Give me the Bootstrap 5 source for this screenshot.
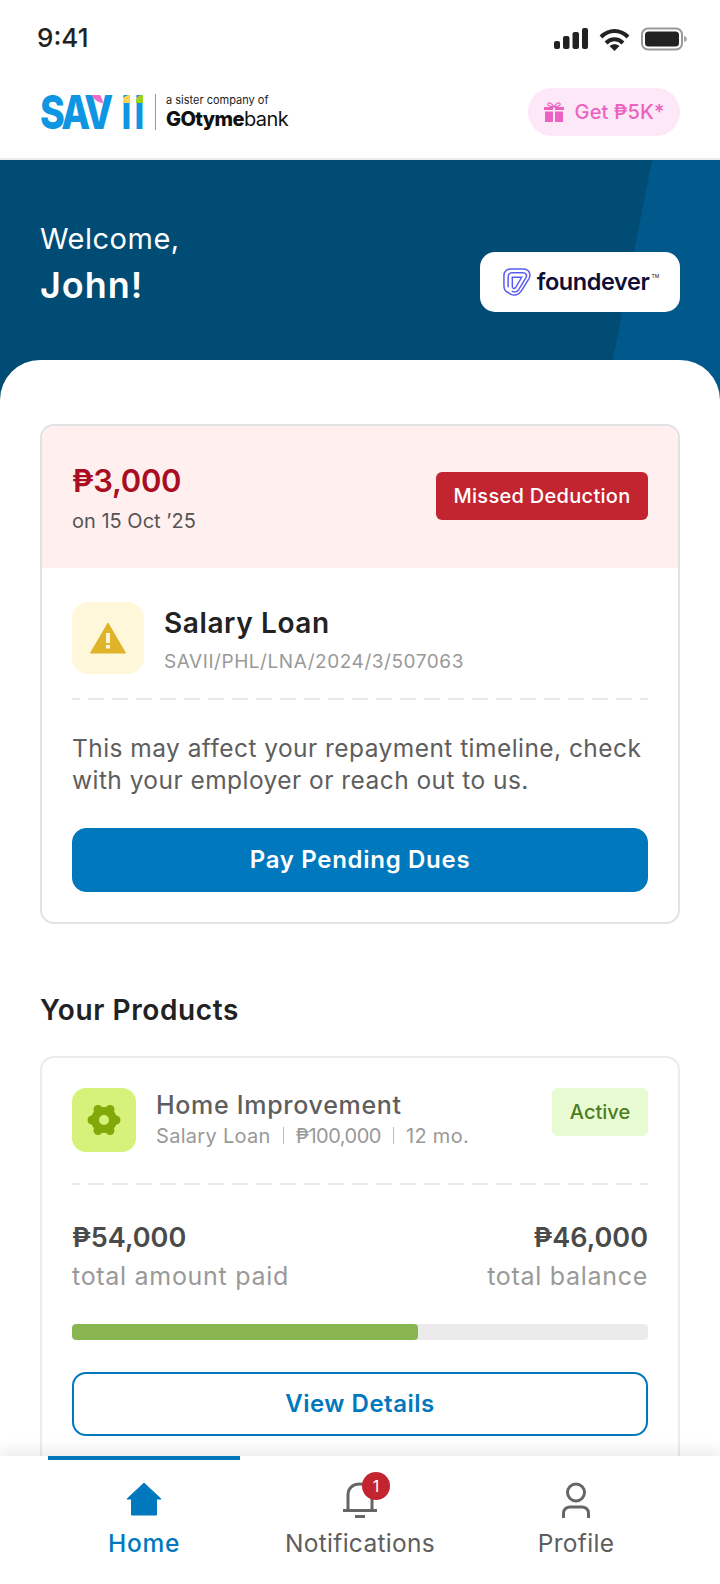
<!DOCTYPE html>
<html lang="en">
<head>
    <meta charset="UTF-8">
    <meta name="viewport" content="width=device-width, initial-scale=1.0">
    <title>SAVii Home</title>
    <link href="https://cdn.jsdelivr.net/npm/bootstrap@5.3.2/dist/css/bootstrap.min.css" rel="stylesheet">
    <style>
        html, body { height: 100%; }
        body {
            font-family: Inter, "Noto Sans", sans-serif;
            color: #222;
            background: #fff;
            overflow: hidden;
        }
        .app-screen { height: 1584px; }
        .status-bar { height: 70px; padding: 22px 33px 0 37px; }
        .status-time { font-size: 26px; font-weight: 500; line-height: 32px; }
        .status-icons { gap: 11px; padding-top: 5px; }
        .top-header { height: 90px; padding: 0 40px 4px; border-bottom: 2px solid #ececec; }
        .brand-savii { position: relative; width: 103px; height: 36px; font-size: 47px; line-height: 36px; font-weight: 800; color: #0f96e2; }
        .brand-sav { width: 80px; white-space: nowrap; }
        .brand-sav span { display: inline-block; transform: scaleX(.8); transform-origin: left center; letter-spacing: -3.5px; }
        .brand-i { width: 13px; font-weight: 700; }
        .brand-i span { transform: scaleX(.85); }
        .brand-petal { position: absolute; left: 0; top: -6px; }
        .brand-sep { width: 1px; height: 36px; background: #999; margin: 0 10px 0 12px; }
        .brand-sister { font-size: 11px; line-height: 13px; color: #222; }
        .brand-gotyme { font-size: 20px; line-height: 22px; color: #111; letter-spacing: -.6px; margin-top: 1px; }
        .brand-gotyme b { font-weight: 800; }
        .gift-pill { height: 48px; width: 152px; background: #fde8f7; color: #ec62c0; border-radius: 24px; font-size: 20px; font-weight: 500; letter-spacing: .1px; gap: 11px; }
        .hero-band { position: relative; height: 240px; background: #004c74; color: #fff; padding: 0 40px 88px; overflow: hidden; }
        .hero-band::before { content: ""; position: absolute; inset: 0; background: #00598a; clip-path: polygon(652px 0, 720px 0, 720px 100%, 605px 100%); }
        .hero-text, .employer-chip { position: relative; }
        .hero-welcome { font-size: 29px; line-height: 46px; letter-spacing: .5px; }
        .hero-name { font-size: 36px; line-height: 46px; font-weight: 600; letter-spacing: 1px; margin-bottom: 4px; }
        .employer-chip { width: 200px; height: 60px; border-radius: 15px; background: #fff; color: #0f0f36; gap: 6px; }
        .employer-name { font-size: 23.5px; font-weight: 600; letter-spacing: -.4px; position: relative; }
        .employer-name sup { font-size: 5px; top: -12px; left: 2px; font-weight: 400; letter-spacing: 0; }
        .content-sheet { position: relative; background: #fff; margin-top: -40px; border-radius: 40px 40px 0 0; padding: 64px 40px 0; flex: 1 1 0; overflow: hidden; min-height: 0; }
        .loan-card { border: 2px solid #e2e2e2; border-radius: 14px; overflow: hidden; height: 500px; }
        .loan-top { height: 142px; background: #fff0ef; padding: 0 30px 2px; }
        .loan-amounts { margin-top: 6px; }
        .amount-due { font-size: 31px; line-height: 44px; font-weight: 600; letter-spacing: -.3px; color: #a80d22; }
        .amount-date { font-size: 20px; line-height: 36px; color: #555; }
        .missed-tag { width: 212px; height: 48px; background: #c2252f; color: #fff; border-radius: 6px; font-size: 20px; font-weight: 500; letter-spacing: .3px; }
        .loan-body { padding: 34px 30px 0; }
        .warn-icon { width: 72px; height: 72px; border-radius: 16px; background: #fff7d9; margin-right: 20px; }
        .loan-heading { margin-top: 2px; }
        .loan-title { font-size: 28px; line-height: 38px; font-weight: 600; letter-spacing: .6px; }
        .loan-ref { font-size: 19px; line-height: 40px; color: #999; letter-spacing: .55px; }
        .dash-line { height: 2px; background: repeating-linear-gradient(90deg, #e9e9e9 0 8px, transparent 8px 16px, #e9e9e9 16px 24px); }
        .loan-dash { margin-top: 16px; }
        .loan-note { font-size: 24.5px; line-height: 32px; letter-spacing: .45px; color: #5e5e5e; margin: 32px 0 32px; white-space: nowrap; }
        .btn-pay { height: 64px; background: #0078bd; border-color: #0078bd; color: #fff; border-radius: 14px; font-size: 24px; font-weight: 600; letter-spacing: .7px; }
        .section-head { font-size: 28px; line-height: 36px; font-weight: 600; letter-spacing: .6px; margin: 68px 0 28px; }
        .product-card { border: 2px solid #ececec; border-radius: 14px; padding: 30px 30px 0; height: 560px; }
        .prod-icon { width: 64px; height: 64px; border-radius: 14px; background: #d7f27a; margin-right: 20px; }
        .prod-title { font-size: 25px; line-height: 32px; font-weight: 500; letter-spacing: .7px; color: #5e5e5e; }
        .prod-meta { font-size: 20px; line-height: 30px; letter-spacing: .3px; color: #999; }
        .prod-meta i { display: inline-block; width: 1px; height: 17px; background: #bbb; margin: 0 12px; vertical-align: -1px; }
        .prod-meta span { letter-spacing: -.5px; }
        .active-tag { width: 96px; height: 48px; background: #e9fbd2; color: #4b7d1e; border-radius: 6px; font-size: 20px; font-weight: 500; }
        .prod-dash { margin-top: 31px; margin-bottom: 35px; }
        .stat-value { font-size: 27px; line-height: 36px; font-weight: 600; color: #4a4a4a; }
        .stat-label { font-size: 25px; line-height: 40px; letter-spacing: .7px; color: #999; }
        .repay-bar { height: 16px; background: #ebebeb; border-radius: 4px; margin-top: 28px; }
        .repay-bar .progress-bar { background: #88b550; border-radius: 4px; }
        .btn-details { height: 64px; border: 2px solid #0078bd; color: #0078bd; background: #fff; border-radius: 14px; font-size: 24px; font-weight: 600; letter-spacing: .5px; margin-top: 32px; }
        .tab-bar { position: relative; height: 128px; background: #fff; box-shadow: 0 -6px 14px rgba(0,0,0,.08); padding: 0 48px; gap: 24px; }
        .tab-item { position: relative; width: 192px; padding-top: 26px; font-size: 24.5px; line-height: 34px; letter-spacing: .3px; color: #5e5e5e; }
        .tab-item.is-on { color: #0078bd; font-weight: 500; letter-spacing: .7px; border-top: 4px solid #0078bd; padding-top: 22px; }
        .tab-icon { height: 44px; }
        .tab-count { position: absolute; left: 98px; top: 16px; width: 28px; height: 28px; border-radius: 50%; background: #c2252f; color: #fff; font-size: 16px; line-height: 28px; font-weight: 400; letter-spacing: 0; }
    </style>
</head>
<body>
    <div class="app-screen d-flex flex-column">
        <div class="status-bar d-flex justify-content-between align-items-start flex-shrink-0">
            <div class="status-time">9:41</div>
            <div class="status-icons d-flex align-items-center">
                <svg width="34" height="22" viewBox="0 0 34 22" fill="#222">
                    <rect x="0" y="13" width="6" height="8" rx="2"/><rect x="9" y="8" width="6.500" height="13" rx="2"/>
                    <rect x="18.500" y="4" width="6.500" height="17" rx="2"/><rect x="28" y="0" width="6" height="21" rx="2"/>
                </svg>
                <svg width="31" height="23" viewBox="0 0 31 23" fill="none" stroke="#222" stroke-width="4">
                    <path d="M2 9c8-8 19-8 27 0"/><path d="M7 15c5-5 12-5 17 0"/><path d="M15.500 23l-5-5c3-2.500 7-2.500 10 0z" fill="#222" stroke="none"/>
                </svg>
                <svg width="46" height="24" viewBox="0 0 46 24">
                    <rect x="1" y="1.500" width="40" height="21" rx="6" fill="none" stroke="#999" stroke-width="2"/>
                    <rect x="4" y="4.500" width="34" height="15" rx="3.500" fill="#222"/>
                    <path d="M43 9c2 .5 3 1.500 3 3s-1 2.500-3 3z" fill="#aaa"/>
                </svg>
            </div>
        </div>

        <header class="top-header d-flex justify-content-between align-items-center flex-shrink-0">
            <div class="d-flex align-items-center">
                <div class="brand-savii d-flex">
                    <div class="brand-sav"><span>SAV</span></div>
                    <div class="brand-i d-flex justify-content-center"><span>i</span></div>
                    <div class="brand-i d-flex justify-content-center"><span>i</span></div>
                    <svg class="brand-petal" width="106" height="16" viewBox="0 0 106 16">
                        <rect x="78" y="0" width="28" height="7" fill="#fff"/>
                        <path d="M51 7h9c1.500 2 2.500 5 3 8-5-.5-9-3.500-12-8z" fill="#ec6cc6"/>
                        <path d="M83 15v-2c0-4 3-6 7-6v8z" fill="#fdd24d"/>
                        <path d="M96 15v-2c0-4 3-6 7-6v8z" fill="#9fd21c"/>
                    </svg>
                </div>
                <div class="brand-sep"></div>
                <div>
                    <div class="brand-sister">a sister company of</div>
                    <div class="brand-gotyme"><b>GOtyme</b>bank</div>
                </div>
            </div>
            <div class="gift-pill d-flex align-items-center justify-content-center">
                <svg width="20" height="20" viewBox="0 0 20 20" fill="#ec62c0">
                    <path d="M0 5h9v3H0zM11 5h9v3h-9zM1 9.500h8V20H1zM11 9.500h8V20h-8z"/>
                    <path d="M10 5C8 1 5 0 4 1.500S6 5 10 5c4 0 7-2 6-3.500S12 1 10 5z" fill="none" stroke="#ec62c0" stroke-width="1.200"/>
                </svg>
                <span>Get ₱5K*</span>
            </div>
        </header>

        <section class="hero-band d-flex justify-content-between align-items-end flex-shrink-0">
            <div class="hero-text">
                <div class="hero-welcome">Welcome,</div>
                <div class="hero-name">John!</div>
            </div>
            <div class="employer-chip d-flex align-items-center justify-content-center">
                <svg width="28" height="28" viewBox="0 0 30 30" fill="none" stroke="#5a5cf0" stroke-width="1.600" stroke-linecap="round">
                    <path d="M8 1H22C28 1 30 7 28 11L20 24C17 29 12 30 8 28L5 26C2 25 1 22 1 19V8C1 4 4 1 8 1z"/>
                    <path d="M9 5H21C25 5 26 8 24.500 10.500L17 23C15 26 12 26 10 25M5.500 20V9C5.500 7 6.500 6 8 5.500"/>
                    <path d="M10 10H20L13.500 21C12 22.500 10 22 10 20z"/>
                </svg>
                <span class="employer-name">foundever<sup>TM</sup></span>
            </div>
        </section>

        <main class="content-sheet">
            <div class="loan-card">
                <div class="loan-top d-flex justify-content-between align-items-center">
                    <div class="loan-amounts">
                        <div class="amount-due">₱3,000</div>
                        <div class="amount-date">on 15 Oct ’25</div>
                    </div>
                    <div class="missed-tag d-flex align-items-center justify-content-center">Missed Deduction</div>
                </div>
                <div class="loan-body">
                    <div class="d-flex align-items-start">
                        <div class="warn-icon d-flex align-items-center justify-content-center">
                            <svg width="36" height="32" viewBox="0 0 36 32">
                                <path d="M18 1L35.500 31H.5z" fill="#dfb32a" stroke="#dfb32a" stroke-linejoin="round"/>
                                <rect x="16" y="11" width="4" height="10" fill="#fff6d8"/><rect x="16" y="23" width="4" height="3.500" fill="#fff6d8"/>
                            </svg>
                        </div>
                        <div class="loan-heading">
                            <div class="loan-title">Salary Loan</div>
                            <div class="loan-ref">SAVII/PHL/LNA/2024/3/507063</div>
                        </div>
                    </div>
                    <div class="dash-line loan-dash"></div>
                    <p class="loan-note">This may affect your repayment timeline, check<br>with your employer or reach out to us.</p>
                    <button class="btn btn-pay w-100" type="button">Pay Pending Dues</button>
                </div>
            </div>

            <h2 class="section-head">Your Products</h2>

            <div class="product-card">
                <div class="d-flex justify-content-between align-items-start">
                    <div class="d-flex align-items-center">
                        <div class="prod-icon d-flex align-items-center justify-content-center">
                            <svg width="36" height="34" viewBox="0 0 36 34" fill="#82a90a">
                                <circle cx="18" cy="17" r="13"/>
                                <circle cx="30" cy="17" r="4.500"/><circle cx="24" cy="6.500" r="4.500"/><circle cx="12" cy="6.500" r="4.500"/>
                                <circle cx="6" cy="17" r="4.500"/><circle cx="12" cy="27.500" r="4.500"/><circle cx="24" cy="27.500" r="4.500"/>
                                <circle cx="18" cy="17" r="5" fill="#d7f27a"/>
                            </svg>
                        </div>
                        <div>
                            <div class="prod-title">Home Improvement</div>
                            <div class="prod-meta">Salary Loan<i></i><span>₱100,000</span><i></i>12 mo.</div>
                        </div>
                    </div>
                    <div class="active-tag d-flex align-items-center justify-content-center">Active</div>
                </div>
                <div class="dash-line prod-dash"></div>
                <div class="d-flex justify-content-between">
                    <div>
                        <div class="stat-value">₱54,000</div>
                        <div class="stat-label">total amount paid</div>
                    </div>
                    <div class="text-end">
                        <div class="stat-value">₱46,000</div>
                        <div class="stat-label">total balance</div>
                    </div>
                </div>
                <div class="progress repay-bar" role="progressbar" aria-valuenow="60" aria-valuemin="0" aria-valuemax="100">
                    <div class="progress-bar" style="width: 60%"></div>
                </div>
                <button class="btn btn-details w-100" type="button">View Details</button>
            </div>
        </main>

        <nav class="tab-bar d-flex flex-shrink-0 text-center">
            <div class="tab-item is-on">
                <div class="tab-icon">
                    <svg class="d-block mx-auto" width="36" height="34" viewBox="0 0 36 34" fill="#0078bd" stroke="#0078bd" stroke-linejoin="round">
                        <path d="M18 1L35 17H30.500V33H5.500V17H1z"/>
                    </svg>
                </div>
                Home
            </div>
            <div class="tab-item">
                <div class="tab-icon">
                    <svg class="d-block mx-auto" width="34" height="36" viewBox="0 0 34 36" fill="none" stroke="#666" stroke-width="3">
                        <path d="M5 28V13C5 6 10 2 17 2s12 4 12 11v15"/><path d="M0 28.500h34"/><path d="M12 34.500h10"/>
                    </svg>
                </div>
                Notifications
                <span class="tab-count">1</span>
            </div>
            <div class="tab-item">
                <div class="tab-icon">
                    <svg class="d-block mx-auto" width="30" height="36" viewBox="0 0 30 36" fill="none" stroke="#666" stroke-width="3">
                        <ellipse cx="15" cy="10.500" rx="8.500" ry="8.500"/><path d="M2.500 36V31C2.500 27 6 25 9 25H21C24 25 27.500 27 27.500 31V36"/>
                    </svg>
                </div>
                Profile
            </div>
        </nav>
    </div>

    <script src="https://cdn.jsdelivr.net/npm/bootstrap@5.3.2/dist/js/bootstrap.bundle.min.js"></script>
</body>
</html>
